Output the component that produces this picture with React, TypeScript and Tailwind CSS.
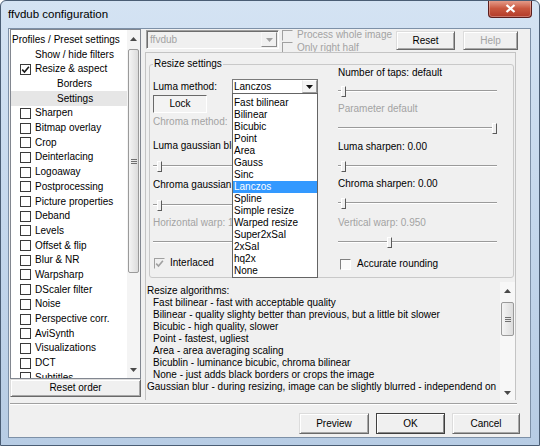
import React from 'react';

type TreeRow = { label: string; kind: 'root' | 'l1' | 'check' | 'l2'; checked?: boolean; selected?: boolean };

const treeRows: TreeRow[] = [
  { label: 'Profiles / Preset settings', kind: 'root' },
  { label: 'Show / hide filters', kind: 'l1' },
  { label: 'Resize & aspect', kind: 'check', checked: true },
  { label: 'Borders', kind: 'l2' },
  { label: 'Settings', kind: 'l2', selected: true },
  ...[
    'Sharpen',
    'Bitmap overlay',
    'Crop',
    'Deinterlacing',
    'Logoaway',
    'Postprocessing',
    'Picture properties',
    'Deband',
    'Levels',
    'Offset & flip',
    'Blur & NR',
    'Warpsharp',
    'DScaler filter',
    'Noise',
    'Perspective corr.',
    'AviSynth',
    'Visualizations',
    'DCT',
    'Subtitles',
  ].map((label) => ({ label, kind: 'check' as const })),
];

const resizeMethods = [
  'Fast bilinear',
  'Bilinear',
  'Bicubic',
  'Point',
  'Area',
  'Gauss',
  'Sinc',
  'Lanczos',
  'Spline',
  'Simple resize',
  'Warped resize',
  'Super2xSaI',
  '2xSaI',
  'hq2x',
  'None',
];

const algoLines = [
  { text: 'Resize algorithms:', indent: false },
  { text: 'Fast bilinear - fast with acceptable quality', indent: true },
  { text: 'Bilinear - quality slighty better than previous, but a little bit slower', indent: true },
  { text: 'Bicubic - high quality, slower', indent: true },
  { text: 'Point - fastest, ugliest', indent: true },
  { text: 'Area - area averaging scaling', indent: true },
  { text: 'Bicublin - luminance bicubic, chroma bilinear', indent: true },
  { text: 'None - just adds black borders or crops the image', indent: true },
  { text: 'Gaussian blur - during resizing, image can be slightly blurred - independend on', indent: false },
];

const padByKind = {
  root: 'pl-[1px]',
  l1: 'pl-[24px]',
  check: 'pl-[9px]',
  l2: 'pl-[46px]',
};

function Tick({ color = '#1a1a1a' }: { color?: string }) {
  return (
    <svg width="9" height="9" viewBox="0 0 9 9">
      <path d="M1.2 4.6 L3.5 7 L7.9 1.8" stroke={color} strokeWidth="1.6" fill="none" />
    </svg>
  );
}

function TreeBox({ checked }: { checked?: boolean }) {
  return (
    <span className="w-[11px] h-[11px] mr-[4px] shrink-0 border border-[#3a3a3a] bg-white flex items-center justify-center">
      {checked && <Tick />}
    </span>
  );
}

// classic sunken check box (dark top/left edge)
function ClassicBox({ checked, disabled }: { checked?: boolean; disabled?: boolean }) {
  return (
    <span
      className={`w-[11px] h-[11px] shrink-0 border flex items-center justify-center ${
        disabled
          ? 'border-t-[#a0a0a0] border-l-[#a0a0a0] border-r-[#f0f0f0] border-b-[#f0f0f0] bg-[#f0f0f0]'
          : 'border-t-[#808080] border-l-[#808080] border-r-white border-b-white bg-[#fbfbfb]'
      }`}
    >
      {checked && <Tick color={disabled ? '#a0a0a0' : '#1a1a1a'} />}
    </span>
  );
}

function Arrow({ dir, color = '#4a4a4a' }: { dir: 'up' | 'down'; color?: string }) {
  return (
    <svg width="7" height="4" viewBox="0 0 7 4">
      <path d={dir === 'up' ? 'M0 4 L3.5 0 L7 4 Z' : 'M0 0 L7 0 L3.5 4 Z'} fill={color} />
    </svg>
  );
}

function Thumb({ className }: { className: string }) {
  return (
    <div
      className={`mx-[1px] shrink-0 rounded-[2px] border border-[#9a9a9a] bg-linear-to-r from-[#f5f5f5] to-[#dcdcdc] flex items-center justify-center ${className}`}
    >
      <div className="flex flex-col gap-[1px]">
        <div className="w-[6px] h-[1px] bg-[#707070]" />
        <div className="w-[6px] h-[1px] bg-[#707070]" />
        <div className="w-[6px] h-[1px] bg-[#707070]" />
      </div>
    </div>
  );
}

function Button({
  children,
  className = '',
  disabled = false,
  isDefault = false,
}: {
  children: React.ReactNode;
  className?: string;
  disabled?: boolean;
  isDefault?: boolean;
}) {
  return (
    <div
      className={`shrink-0 flex items-center justify-center bg-[#f0f0f0] border ${
        isDefault
          ? 'border-[#3f3f3f] shadow-[inset_1px_1px_#ffffff,inset_-1px_-1px_#8a8a8a]'
          : 'border-t-[#dcdcdc] border-l-[#dcdcdc] border-r-[#696969] border-b-[#696969] shadow-[inset_1px_1px_#ffffff,inset_-1px_-1px_#a8a8a8]'
      } ${disabled ? 'text-[#a3a3a3]' : 'text-black'} ${className}`}
    >
      {children}
    </div>
  );
}

function Slider({ pos, className }: { pos: number | null; className: string }) {
  return (
    <div className={`relative h-[16px] shrink-0 ${className}`}>
      <div className="absolute left-0 right-0 top-[7px] h-[2px] border-t border-t-[#9a9a9a] border-b border-b-white" />
      {pos !== null && (
        <div
          className="absolute top-[3px] w-[5px] h-[11px] bg-[#f0f0f0] border border-t-white border-l-white border-r-[#5a5a5a] border-b-[#5a5a5a]"
          style={{ left: pos }}
        />
      )}
    </div>
  );
}

function Label({ children, disabled, className = '' }: { children: React.ReactNode; disabled?: boolean; className?: string }) {
  return (
    <div className={`h-[12px] leading-[12px] whitespace-nowrap shrink-0 ${disabled ? 'text-[#a3a3a3]' : ''} ${className}`}>
      {children}
    </div>
  );
}

export default function App() {
  return (
    <div className="w-[540px] h-[446px] flex flex-col bg-linear-to-b from-[#d4e3f3] via-[#c4d7ec] to-[#b7cce4] border border-[#4a5d74] rounded-t-[6px] overflow-hidden font-['Liberation_Sans',Arial,sans-serif] text-[10px] leading-[12px] text-black select-none">
      {/* title bar */}
      <div className="h-[27px] shrink-0 flex justify-between">
        <div className="pl-[7px] pt-[6px] text-[11.5px] leading-[14px]">ffvdub configuration</div>
        <div className="mr-[7px] -mt-[1px] w-[44px] h-[18px] rounded-b-[4px] border border-t-0 border-[#5b1d1d] bg-linear-to-b from-[#e7a392] via-[#c9573f] to-[#b23a28] shadow-[inset_0_0_0_1px_rgba(255,255,255,0.3)] flex items-center justify-center">
          <svg width="11" height="9" viewBox="0 0 11 9">
            <path d="M1.5 1 L9.5 8 M9.5 1 L1.5 8" stroke="#ffffff" strokeWidth="2.2" />
          </svg>
        </div>
      </div>

      {/* client area */}
      <div className="ml-[7px] w-[523px] h-[410px] shrink-0 border border-[#7d90a7] bg-[#f0f0f0] flex flex-col">
        <div className="h-[371px] flex shrink-0">
          {/* left: filter tree */}
          <div className="ml-[1px] w-[131px] flex flex-col">
            <div className="h-[350px] border border-[#828790] bg-white flex">
              <div className="flex-1 pt-[2.6px] overflow-hidden">
                {treeRows.map((r) => (
                  <div
                    key={r.label}
                    className={`h-[14.7px] flex items-center whitespace-nowrap ${padByKind[r.kind]} ${r.selected ? 'bg-[#e6e6e6]' : ''}`}
                  >
                    {r.kind === 'check' && <TreeBox checked={r.checked} />}
                    {r.label}
                  </div>
                ))}
              </div>
              <div className="w-[13px] bg-[#f4f4f4] flex flex-col">
                <div className="h-[17px] shrink-0 flex items-center justify-center">
                  <Arrow dir="up" />
                </div>
                <Thumb className="mt-[2px] h-[224px]" />
                <div className="flex-1" />
                <div className="h-[17px] shrink-0 flex items-center justify-center">
                  <Arrow dir="down" />
                </div>
              </div>
            </div>
            <Button className="h-[18px]">Reset order</Button>
          </div>

          {/* right: page */}
          <div className="ml-[4px] w-[374px] flex flex-col">
            <div className="h-[23px] shrink-0 flex items-start">
              <div className="mt-[1px] ml-[1px] w-[133px] h-[19px] border border-t-[#a0a0a0] border-l-[#a0a0a0] border-r-white border-b-white shadow-[inset_1px_1px_#6e6e6e] bg-[#f0f0f0] flex items-center">
                <span className="flex-1 pl-[3px] text-[#a3a3a3]">ffvdub</span>
                <div className="w-[16px] h-[15px] mr-[1px] border border-t-[#f8f8f8] border-l-[#f8f8f8] border-r-[#8a8a8a] border-b-[#8a8a8a] flex items-center justify-center">
                  <Arrow dir="down" color="#a0a0a0" />
                </div>
              </div>
              <div className="ml-[3px] w-[111px] flex flex-col text-[#a3a3a3]">
                <div className="h-[12.5px] flex items-center gap-[4px]">
                  <ClassicBox disabled />
                  <span className="whitespace-nowrap">Process whole image</span>
                </div>
                <div className="h-[12.5px] flex items-center gap-[4px]">
                  <ClassicBox disabled />
                  <span className="whitespace-nowrap">Only right half</span>
                </div>
              </div>
              <Button className="mt-[2px] ml-[3px] w-[59px] h-[19px]">Reset</Button>
              <Button className="mt-[2px] ml-[8px] w-[55px] h-[19px]" disabled>
                Help
              </Button>
            </div>

            <div className="w-[371px] flex-1 border-t border-l border-r border-[#c4c4c4] pt-[5px] flex flex-col">
              <fieldset className="ml-[3px] w-[365px] h-[220px] shrink-0 border border-[#c9c9c9] rounded-[3px] px-[3px]">
                <legend className="px-[1px] leading-[12px]">Resize settings</legend>
                <div className="flex">
                  {/* left column, partly hidden by the open list */}
                  <div className="w-[185px] flex flex-col">
                    <div className="mt-[9px] h-[15px] flex items-center">
                      <span className="w-[79px] shrink-0">Luma method:</span>
                      <div className="relative w-[86px] h-[15px] border border-[#7a7a7a] bg-white flex items-center">
                        <span className="flex-1 pl-[1px]">Lanczos</span>
                        <div className="w-[15px] h-[13px] border border-t-white border-l-[#e8e8e8] border-r-[#9a9a9a] border-b-[#9a9a9a] bg-[#f4f4f4] flex items-center justify-center">
                          <Arrow dir="down" color="#111111" />
                        </div>
                        <div className="absolute top-full -left-[1px] w-[86px] z-10 border border-[#646464] bg-white pt-[3px]">
                          {resizeMethods.map((m) => (
                            <div
                              key={m}
                              className={`h-[12px] leading-[12px] pl-[1px] whitespace-nowrap ${m === 'Lanczos' ? 'bg-[#3399ff] text-white' : ''}`}
                            >
                              {m}
                            </div>
                          ))}
                        </div>
                      </div>
                    </div>
                    <div className="mt-[1px] w-[54px] h-[18px] shrink-0 border border-t-[#696969] border-l-[#696969] border-r-white border-b-white bg-[#f3f3f3] flex items-center justify-center">
                      Lock
                    </div>
                    <Label disabled className="mt-[3px] w-[79px] overflow-hidden">
                      Chroma method:
                    </Label>
                    <Label className="mt-[12px] w-[79px] overflow-hidden">Luma gaussian blur: 0.00</Label>
                    <Slider pos={4} className="mt-[6px] w-[160px]" />
                    <Label className="mt-[5px] w-[79px] overflow-hidden">Chroma gaussian blur: 0.00</Label>
                    <Slider pos={4} className="mt-[6px] w-[160px]" />
                    <Label disabled className="mt-[4px] w-[79px] overflow-hidden">
                      Horizontal warp: 1.000
                    </Label>
                    <Slider pos={null} className="mt-[5px] w-[160px]" />
                    <div className="mt-[7px] h-[12px] flex items-center gap-[5px]">
                      <span className="ml-[1px]">
                        <ClassicBox checked disabled />
                      </span>
                      <span>Interlaced</span>
                    </div>
                  </div>

                  {/* right column */}
                  <div className="w-[165px] -mt-[3px] flex flex-col">
                    <Label>Number of taps: default</Label>
                    <Slider pos={3} className="mt-[4px] w-[159px]" />
                    <Label disabled className="mt-[4px]">
                      Parameter default
                    </Label>
                    <Slider pos={154} className="mt-[5px] w-[159px]" />
                    <Label className="mt-[5px]">Luma sharpen: 0.00</Label>
                    <Slider pos={3} className="mt-[5px] w-[159px]" />
                    <Label className="mt-[4px]">Chroma sharpen: 0.00</Label>
                    <Slider pos={3} className="mt-[5px] w-[159px]" />
                    <Label disabled className="mt-[6px]">
                      Vertical warp: 0.950
                    </Label>
                    <Slider pos={49} className="mt-[5px] w-[159px]" />
                    <div className="mt-[8px] h-[12px] flex items-center gap-[6px]">
                      <span className="ml-[2px]">
                        <ClassicBox />
                      </span>
                      <span>Accurate rounding</span>
                    </div>
                  </div>
                </div>
              </fieldset>

              {/* algorithm description */}
              <div className="mt-[4px] flex-1 flex min-h-0">
                <div className="flex-1 pl-[1px] pt-[3px] overflow-hidden whitespace-nowrap">
                  {algoLines.map((l) => (
                    <div key={l.text} className={`h-[12px] leading-[12px] ${l.indent ? 'pl-[6px]' : ''}`}>
                      {l.text}
                    </div>
                  ))}
                </div>
                <div className="w-[15px] bg-[#f7f7f7] flex flex-col">
                  <div className="h-[17px] shrink-0 flex items-center justify-center">
                    <Arrow dir="up" />
                  </div>
                  <Thumb className="mt-[3px] h-[34px]" />
                  <div className="flex-1" />
                  <div className="h-[15px] mb-[2px] shrink-0 flex items-end justify-center pb-[3px]">
                    <Arrow dir="down" />
                  </div>
                </div>
              </div>
            </div>
          </div>
        </div>

        {/* separator */}
        <div className="mt-[3px] ml-[1px] w-[507px] h-[2px] shrink-0 border-t border-t-[#a0a0a0] border-b border-b-white" />

        {/* dialog buttons */}
        <div className="mt-[8px] h-[21px] shrink-0 flex justify-end gap-[7px] pr-[10px]">
          <Button className="w-[70px] h-[21px]">Preview</Button>
          <Button className="w-[69px] h-[21px]" isDefault>
            OK
          </Button>
          <Button className="w-[68px] h-[21px]">Cancel</Button>
        </div>
      </div>
    </div>
  );
}
